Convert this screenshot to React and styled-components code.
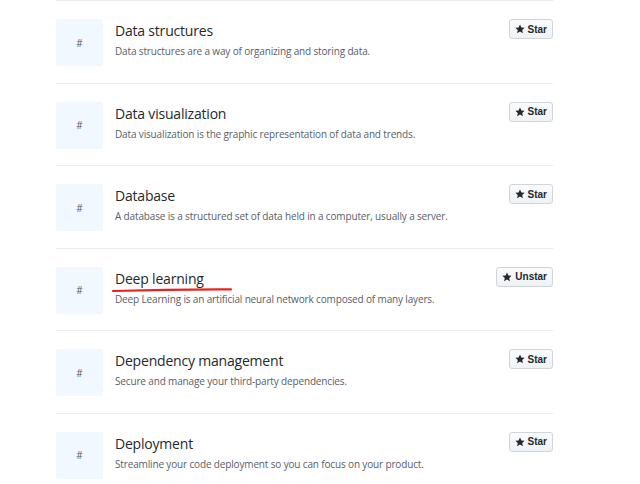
import React from "react";
import styled, { createGlobalStyle } from "styled-components";

const GlobalStyle = createGlobalStyle`
  html, body { margin: 0; padding: 0; background: #fff; }
  body { font-family: "Open Sans", "Noto Sans", Arial, sans-serif; color: #24292e; }
`;

const List = styled.ul`
  list-style: none;
  margin: 0 0 0 56px;
  padding: 0;
  width: 497px;
`;

const Row = styled.li`
  display: flex;
  align-items: flex-start;
  padding: 17px 0 17.6px;
  border-top: 1px solid #e9ebee;
  height: 47px;
  box-sizing: content-box;
`;

const Topic = styled.div`
  flex: 0 0 47px;
  height: 47px;
  margin-top: 1px;
  display: flex;
  align-items: center;
  justify-content: center;
  background: #f1f8ff;
  border-radius: 2px;
  color: #586069;
  font-size: 10px;
  margin-right: 12px;
`;

const Body = styled.div`
  flex: 1;
  min-width: 0;
  padding-top: 2px;
`;

const Title = styled.h3`
  position: relative;
  margin: 0;
  font-size: 14px;
  font-weight: 400;
  letter-spacing: -0.2px;
  line-height: 22px;
  color: #24292e;
`;

const Desc = styled.p`
  margin: 2px 0 0;
  font-size: 10px;
  letter-spacing: -0.15px;
  line-height: 15px;
  color: #586069;
`;

const StarButton = styled.button`
  display: inline-flex;
  align-items: center;
  gap: 3px;
  height: 20px;
  margin-top: 1px;
  padding: 0 5px;
  box-sizing: border-box;
  border: 1px solid #d1d5da;
  border-radius: 3px;
  background: linear-gradient(#fafbfc, #eff3f6);
  color: #24292e;
  font-family: "Liberation Sans", Arial, sans-serif;
  font-size: 10px;
  font-weight: 700;
  cursor: pointer;
`;

const Underline = styled.svg`
  position: absolute;
  left: -3px;
  top: 19.5px;
  overflow: visible;
`;

const StarIcon = () => (
  <svg width="10" height="10" viewBox="0 0 14 14" aria-hidden="true">
    <path
      d="M7 0.6l1.95 4.2 4.55.5-3.4 3.1.95 4.5L7 10.6 2.95 12.9l.95-4.5L.5 5.3l4.55-.5z"
      fill="#24292e"
    />
  </svg>
);

const topics = [
  { name: "Data structures", desc: "Data structures are a way of organizing and storing data." },
  { name: "Data visualization", desc: "Data visualization is the graphic representation of data and trends." },
  { name: "Database", desc: "A database is a structured set of data held in a computer, usually a server." },
  { name: "Deep learning", desc: "Deep Learning is an artificial neural network composed of many layers.", starred: true },
  { name: "Dependency management", desc: "Secure and manage your third-party dependencies." },
  { name: "Deployment", desc: "Streamline your code deployment so you can focus on your product." },
];

export default function App() {
  return (
    <>
      <GlobalStyle />
      <List>
        {topics.map((t) => (
          <Row key={t.name}>
            <Topic>#</Topic>
            <Body>
              <Title>
                {t.name}
                {t.starred && (
                  <Underline width="120" height="6" viewBox="0 0 120 6">
                    <path d="M1 4 Q60 2.2 119 2.4" stroke="#e8231c" strokeWidth="2.2" fill="none" strokeLinecap="round" />
                  </Underline>
                )}
              </Title>
              <Desc>{t.desc}</Desc>
            </Body>
            <StarButton>
              <StarIcon />
              {t.starred ? "Unstar" : "Star"}
            </StarButton>
          </Row>
        ))}
      </List>
    </>
  );
}
